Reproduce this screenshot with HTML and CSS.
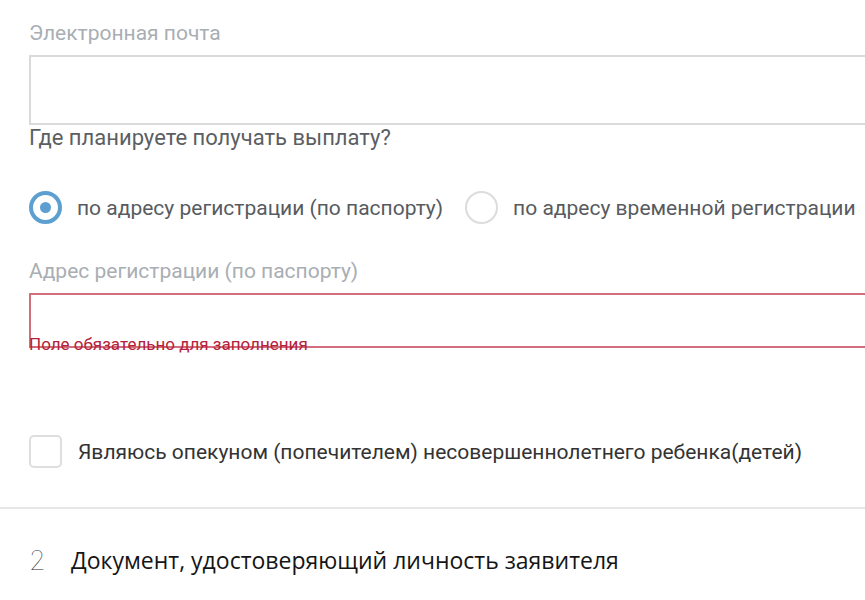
FILE: index.html
```html
<!DOCTYPE html>
<html>
<head>
  <title>Заявление</title>
  <link rel="stylesheet" href="styles.css">
</head>
<body>

  <div class="form">
    <div class="field">
      <label class="field-label">Электронная почта</label>
      <input class="text-input email-input" type="text">
    </div>

    <div class="question">Где планируете получать выплату?</div>

    <div class="radio-row">
      <label class="radio-option">
        <span class="radio checked"></span>
        по адресу регистрации (по паспорту)
      </label>
      <label class="radio-option">
        <span class="radio"></span>
        по адресу временной регистрации
      </label>
    </div>

    <div class="field">
      <label class="field-label">Адрес регистрации (по паспорту)</label>
      <input class="text-input error-input" type="text">
      <div class="error-text">Поле обязательно для заполнения</div>
    </div>

    <label class="check-option">
      <span class="checkbox"></span>
      Являюсь опекуном (попечителем) несовершеннолетнего ребенка(детей)
    </label>
  </div>

  <div class="divider"></div>

  <div class="section-title">
    <span class="step">2</span>
    <span>Документ, удостоверяющий личность заявителя</span>
  </div>

</body>
</html>
```

FILE: styles.css
```css
body {
  font-family: Roboto, "Liberation Sans", sans-serif;
  margin: 0;
  padding: 0;
  background-color: #fff;
  overflow: hidden;
}

.form {
  padding: 21px 0 0 29px;
}

.field {
  display: flex;
  flex-direction: column;
}

.field-label {
  font-size: 21px;
  line-height: 24px;
  color: #a9aeb3;
  margin-bottom: 10px;
}

.text-input {
  box-sizing: border-box;
  width: calc(100% + 20px);
  border: 2px solid #dadada;
  background-color: #fff;
  outline: none;
}

.email-input {
  height: 70px;
}

.question {
  font-size: 22px;
  line-height: 26px;
  color: #5b5f64;
}

.radio-row {
  display: flex;
  align-items: center;
  gap: 22px;
  margin-top: 40px;
  height: 33px;
}

.radio-option {
  display: flex;
  align-items: center;
  gap: 15px;
  font-size: 21px;
  color: #575b60;
  cursor: pointer;
}

.radio {
  box-sizing: border-box;
  width: 33px;
  height: 33px;
  border-radius: 50%;
  border: 2px solid #dcdcdc;
  position: relative;
}

.radio.checked {
  border: 4px solid #5d9fd0;
}

.radio.checked::before {
  content: '';
  position: absolute;
  top: 7px;
  left: 7px;
  width: 11px;
  height: 11px;
  border-radius: 50%;
  background-color: #5d9fd0;
}

.radio-row + .field {
  margin-top: 35px;
}

.error-input {
  height: 55px;
  border-color: #d1707c;
}

.error-text {
  font-size: 17px;
  line-height: 20px;
  color: #b5213a;
  margin-top: -14px;
}

.check-option {
  display: flex;
  align-items: center;
  gap: 16px;
  margin-top: 81px;
  font-size: 21px;
  color: #333;
  cursor: pointer;
}

.checkbox {
  box-sizing: border-box;
  width: 33px;
  height: 33px;
  border: 2px solid #dedede;
  border-radius: 5px;
}

.divider {
  height: 2px;
  background-color: #e6e6e6;
  margin-top: 39px;
}

.section-title {
  display: flex;
  align-items: center;
  height: 32px;
  padding: 35px 0 0 29px;
  font-family: "Open Sans", "Liberation Sans", sans-serif;
  font-size: 23px;
  color: #151515;
}

.step {
  font-family: Inter, Roboto, sans-serif;
  font-weight: 100;
  font-size: 27px;
  color: #2a2a2a;
  width: 42px;
}
```
